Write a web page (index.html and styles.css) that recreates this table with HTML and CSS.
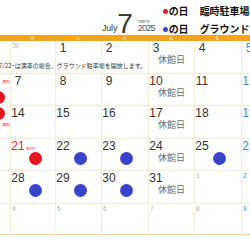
FILE: index.html
```html
<!DOCTYPE html>
<html lang="ja">
<head>
<meta charset="utf-8">
<title>2025年7月 カレンダー</title>
<link rel="stylesheet" href="styles.css">
</head>
<body>
<div class="page">
  <header class="head">
    <div class="title">
      <span class="month-en">July</span>
      <span class="month-num">7</span>
      <span class="year"><span class="wareki">令和7年</span><span class="year-num">2025</span></span>
    </div>
    <div class="legend">
      <div class="legend-row"><span class="ldot red"></span><span class="lname">の日</span><span class="ltext">臨時駐車場</span></div>
      <div class="legend-row"><span class="ldot blue"></span><span class="lname">の日</span><span class="ltext">グラウンド駐車場</span></div>
    </div>
  </header>

  <div class="weekdays">
    <span>日</span><span>月</span><span>火</span><span>水</span><span>木</span><span>金</span><span>土</span>
  </div>

  <div class="grid">
    <!-- row 1 -->
    <div class="cell"><span class="snum">29</span></div>
    <div class="cell"><span class="snum">30</span></div>
    <div class="cell"><span class="num">1</span></div>
    <div class="cell"><span class="num">2</span></div>
    <div class="cell"><span class="num">3</span><span class="closed">休館日</span></div>
    <div class="cell"><span class="num">4</span></div>
    <div class="cell"><span class="num sat">5</span></div>
    <!-- row 2 -->
    <div class="cell">
      <div class="top"><span class="num sun">6</span><span class="tag tag-end">(臨時)</span></div>
      <span class="dot red dot-sun"></span>
    </div>
    <div class="cell"><span class="num">7</span></div>
    <div class="cell"><span class="num">8</span></div>
    <div class="cell"><span class="num">9</span></div>
    <div class="cell"><span class="num">10</span><span class="closed">休館日</span></div>
    <div class="cell"><span class="num">11</span></div>
    <div class="cell"><span class="num sat">12</span></div>
    <!-- row 3 -->
    <div class="cell">
      <div class="top"><span class="num sun">13</span><span class="dot red dot-inline"></span></div>
      <span class="tag tag-below">(臨時)</span>
    </div>
    <div class="cell"><span class="num">14</span></div>
    <div class="cell"><span class="num">15</span></div>
    <div class="cell"><span class="num">16</span></div>
    <div class="cell"><span class="num">17</span><span class="closed">休館日</span></div>
    <div class="cell"><span class="num">18</span></div>
    <div class="cell"><span class="num sat">19</span></div>
    <!-- row 4 -->
    <div class="cell"><span class="num sun">20</span></div>
    <div class="cell">
      <div class="top"><span class="num sun">21</span><span class="tag tag-side">海の日</span></div>
      <span class="dot red"></span>
    </div>
    <div class="cell"><span class="num">22</span><span class="dot blue"></span></div>
    <div class="cell"><span class="num">23</span><span class="dot blue"></span></div>
    <div class="cell"><span class="num">24</span><span class="closed">休館日</span></div>
    <div class="cell"><span class="num">25</span><span class="dot blue"></span></div>
    <div class="cell"><span class="num sat">26</span></div>
    <!-- row 5 -->
    <div class="cell"><span class="num sun">27</span></div>
    <div class="cell"><span class="num">28</span><span class="dot blue"></span></div>
    <div class="cell"><span class="num">29</span><span class="dot blue"></span></div>
    <div class="cell"><span class="num">30</span><span class="dot blue"></span></div>
    <div class="cell"><span class="num">31</span><span class="closed">休館日</span></div>
    <div class="cell"><span class="snum">1</span></div>
    <div class="cell"><span class="snum sat">2</span></div>
    <!-- row 6 -->
    <div class="cell last"><span class="snum">3</span></div>
    <div class="cell last"><span class="snum">4</span></div>
    <div class="cell last"><span class="snum">5</span></div>
    <div class="cell last"><span class="snum">6</span></div>
    <div class="cell last"><span class="snum">7</span></div>
    <div class="cell last"><span class="snum">8</span></div>
    <div class="cell last"><span class="snum sat">9</span></div>

    <p class="note">※7/22~は満車の場合、グラウンド駐車場を開放します。</p>
  </div>
</div>
</body>
</html>
```

FILE: styles.css
```css
html, body {
  margin: 0;
  padding: 0;
  background: #ffffff;
}

body {
  width: 250px;
  height: 250px;
  overflow: hidden;
  font-family: "Liberation Sans", "Noto Sans CJK JP", sans-serif;
  color: #333333;
}

.page {
  margin-left: -36px;
  width: 323px;
}

/* ---------- header ---------- */
.head {
  height: 35px;
  display: flex;
  align-items: flex-start;
  padding-left: 138px;
  white-space: nowrap;
}

.title {
  display: flex;
  align-items: flex-start;
  margin-top: 10px;
  color: #3a3a3a;
}

.month-en {
  font-size: 9px;
  line-height: 9px;
  letter-spacing: -0.2px;
  margin-top: 14px;
}

.month-num {
  font-size: 28px;
  line-height: 22px;
  margin-top: 3px;
}

.year {
  display: flex;
  flex-direction: column;
  margin-top: 9px;
  margin-left: 5px;
  color: #555555;
}

.wareki {
  font-family: "Noto Sans CJK JP", sans-serif;
  font-size: 3.5px;
  line-height: 5px;
}

.year-num {
  font-size: 9px;
  line-height: 9px;
  letter-spacing: -0.8px;
}

.legend {
  display: flex;
  flex-direction: column;
  gap: 6px;
  margin-left: 8px;
  margin-top: 5px;
  font-family: "Noto Sans CJK JP", sans-serif;
  font-weight: 700;
  font-size: 10px;
  color: #111111;
}

.legend-row {
  display: flex;
  align-items: center;
  height: 12px;
  line-height: 12px;
}

.ldot {
  width: 5px;
  height: 5px;
  border-radius: 50%;
  margin-right: 1px;
}

.ldot.red { background: #e8141f; }
.ldot.blue { background: #3b44c9; }

.ltext {
  margin-left: 11px;
}

/* ---------- weekday band ---------- */
.weekdays {
  display: grid;
  grid-template-columns: 46px 45px 46px 47px 46px 47px 46px;
  height: 6px;
  background: #f6a11f;
  font-family: "Noto Sans CJK JP", sans-serif;
  font-size: 4px;
  line-height: 6px;
  color: #ffffff;
  text-align: center;
}

/* ---------- grid ---------- */
.grid {
  position: relative;
  display: grid;
  grid-template-columns: 46px 45px 46px 47px 46px 47px 46px;
  grid-template-rows: 33px 32px 33px 32px 33px 31px;
}

.cell {
  display: flex;
  flex-direction: column;
  align-items: flex-start;
  padding-top: 1px;
  border-left: 1px solid #f6ecd6;
  border-bottom: 1px solid #f6ecd6;
  box-sizing: border-box;
  min-width: 0;
}

.cell:nth-child(7n + 1) {
  border-left: none;
}

.cell.last {
  border-bottom-color: #fbd58f;
}

.top {
  display: flex;
  align-items: flex-start;
  align-self: stretch;
  height: 12px;
}

.num {
  display: block;
  width: 14px;
  text-align: center;
  font-size: 12px;
  line-height: 12px;
  color: #333333;
  flex: none;
}

.num.sat { color: #3a8dd6; }
.num.sun { color: #e8242c; }

.snum {
  display: block;
  padding-left: 1px;
  font-size: 6.5px;
  line-height: 8px;
  color: #b2b2b2;
}

.snum.sat { color: #3a8dd6; }

.closed {
  display: block;
  margin-top: 1px;
  margin-left: 9px;
  font-family: "Noto Sans CJK JP", sans-serif;
  font-size: 9px;
  line-height: 10px;
  color: #6b6b6b;
}

.dot {
  display: block;
  width: 13px;
  height: 13px;
  border-radius: 50%;
  margin-left: 18px;
  flex: none;
}

.dot.red { background: #e8141f; }
.dot.blue { background: #3b44c9; }

.dot.dot-sun {
  margin-left: 28px;
  margin-top: 4px;
}

.dot.dot-inline {
  margin-left: auto;
  margin-right: 5px;
}

.tag {
  font-family: "Noto Sans CJK JP", sans-serif;
  font-size: 3px;
  line-height: 4px;
  color: #e8242c;
  white-space: nowrap;
}

.tag-end {
  margin-left: auto;
  margin-top: 5px;
}

.tag-below {
  align-self: flex-end;
  margin-top: 4px;
}

.tag-side {
  margin-left: 1px;
  margin-top: 7px;
}

.note {
  position: absolute;
  left: 29px;
  top: 22px;
  margin: 0;
  font-family: "Noto Sans CJK JP", sans-serif;
  font-size: 6px;
  line-height: 6px;
  color: #333333;
  white-space: nowrap;
}
```
